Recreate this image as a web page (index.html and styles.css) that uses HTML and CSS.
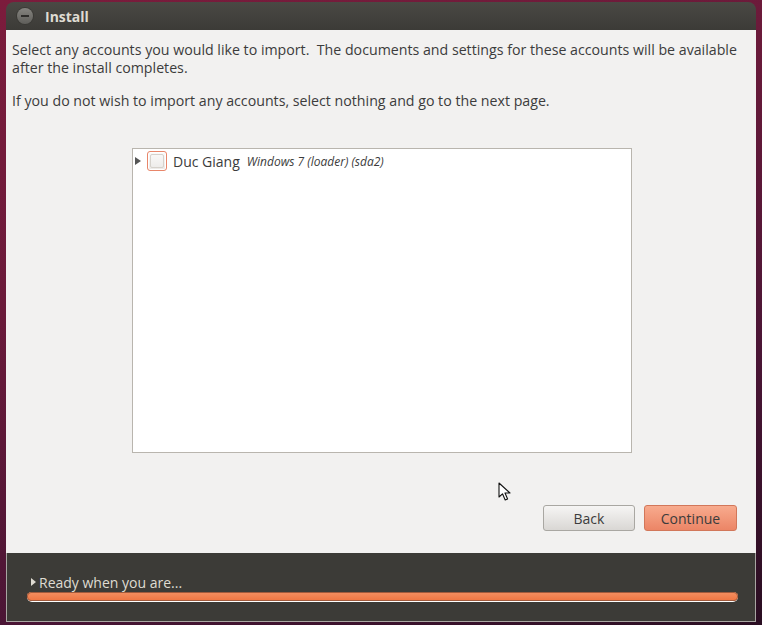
FILE: index.html
```html
<!DOCTYPE html>
<html>
<head>
    <title>Install</title>
    <link rel="stylesheet" href="styles.css">
</head>
<body>
    <div class="window">
        <div class="titlebar">
            <span class="close-btn"><span class="close-line"></span></span>
            <span class="title">Install</span>
        </div>
        <div class="content">
            <p class="intro">Select any accounts you would like to import.&nbsp; The documents and settings for these accounts will be available after the install completes.</p>
            <p class="intro">If you do not wish to import any accounts, select nothing and go to the next page.</p>
            <div class="tree">
                <div class="tree-row">
                    <span class="expander"></span>
                    <span class="checkbox"></span>
                    <span class="user-name">Duc Giang</span>
                    <span class="user-os">Windows 7 (loader) (sda2)</span>
                </div>
            </div>
            <div class="buttons">
                <button class="btn">Back</button>
                <button class="btn btn-primary">Continue</button>
            </div>
            <svg class="cursor" width="14" height="20" viewBox="0 0 14 20">
                <path d="M1 1 L1 15 L4.5 11.8 L7.2 18 L9.6 17 L7 11 L12 11 Z" fill="#fff" stroke="#111" stroke-width="1.1" stroke-linejoin="round"/>
            </svg>
        </div>
        <div class="status">
            <div class="status-label"><span class="status-arrow"></span>Ready when you are...</div>
            <div class="progress"><div class="progress-fill"></div></div>
        </div>
    </div>
</body>
</html>
```

FILE: styles.css
```css
body {
    margin: 0;
    width: 762px;
    height: 625px;
    overflow: hidden;
    background: linear-gradient(160deg, #7c1c3c 0%, #6a1a3a 35%, #4a1535 70%, #2a0e22 100%);
    font-family: "Open Sans", "DejaVu Sans", sans-serif;
}
.window {
    margin: 2px 0 0 6px;
    width: 750px;
    position: relative;
}
.titlebar {
    height: 28px;
    background: linear-gradient(#4a4944, #3c3b37);
    border-radius: 8px 8px 0 0;
    display: flex;
    align-items: center;
    padding-left: 11px;
}
.close-btn {
    width: 16px;
    height: 16px;
    border-radius: 50%;
    background: linear-gradient(#85847f, #5f5e5a);
    box-shadow: 0 0 0 1px #3a3935;
    display: flex;
    align-items: center;
    justify-content: center;
}
.close-line {
    width: 8px;
    height: 2px;
    background: #2e2d2a;
}
.title {
    color: #dfdbd2;
    font-weight: bold;
    font-size: 14px;
    margin-left: 12px;
}
.content {
    background: #f2f1f0;
    height: 523px;
    padding: 11px 0 0 6px;
    box-sizing: border-box;
    position: relative;
    display: flex;
    flex-direction: column;
}
.intro {
    margin: 0 0 15px;
    font-size: 14.2px;
    line-height: 18px;
    color: #3c3c3c;
    padding-right: 8px;
}
.tree {
    margin: 23px 0 0 120px;
    width: 500px;
    height: 305px;
    box-sizing: border-box;
    background: #fff;
    border: 1px solid #b9b5ae;
}
.tree-row {
    display: flex;
    align-items: center;
    height: 22px;
    padding: 1px 0 0 2px;
}
.expander {
    width: 0;
    height: 0;
    border-top: 4px solid transparent;
    border-bottom: 4px solid transparent;
    border-left: 6px solid #555;
}
.checkbox {
    width: 18px;
    height: 18px;
    margin-left: 6px;
    border: 1px solid #e8866a;
    border-radius: 3px;
    background: linear-gradient(#fbfbfa, #ebe9e7);
    box-shadow: inset 0 0 0 1px #fff;
    position: relative;
}
.checkbox::after {
    content: "";
    position: absolute;
    left: 2px;
    top: 2px;
    width: 12px;
    height: 12px;
    border: 1px solid #d6d2cc;
    border-radius: 2px;
}
.user-name {
    margin-left: 6px;
    font-size: 14px;
    color: #3c3c3c;
}
.user-os {
    margin-left: 7px;
    font-size: 12px;
    font-style: italic;
    color: #3c3c3c;
}
.buttons {
    display: flex;
    justify-content: flex-end;
    gap: 9px;
    margin-top: 52px;
    padding-right: 19px;
}
.btn {
    width: 92px;
    height: 26px;
    font-family: inherit;
    font-size: 14px;
    color: #3c3c3c;
    border: 1px solid #a9a7a2;
    border-radius: 3px;
    background: linear-gradient(#f6f5f4, #d9d7d4);
}
.btn-primary {
    width: 93px;
    border-color: #d2775a;
    background: linear-gradient(#f8ab8e, #ec8566);
}
.cursor {
    position: absolute;
    left: 492px;
    top: 452px;
}
.status {
    height: 69px;
    background: #3c3b37;
    border: 1px solid #a8a6a2;
    border-top: none;
    box-sizing: border-box;
    padding: 20px 17px 0 20px;
}
.status-label {
    display: flex;
    align-items: center;
    color: #dfdbd2;
    font-size: 14px;
    height: 18px;
}
.status-arrow {
    width: 0;
    height: 0;
    border-top: 4px solid transparent;
    border-bottom: 4px solid transparent;
    border-left: 5px solid #dfdbd2;
    margin: 0 3px 0 4px;
}
.progress {
    margin-top: 1px;
    height: 10px;
    border-radius: 5px;
    background: #fff;
    padding: 0 0 1px;
    box-sizing: border-box;
}
.progress-fill {
    height: 9px;
    border-radius: 5px;
    background: linear-gradient(#f49062, #ef7440);
    box-shadow: 0 0 0 1px #a15a3c inset;
}
```
